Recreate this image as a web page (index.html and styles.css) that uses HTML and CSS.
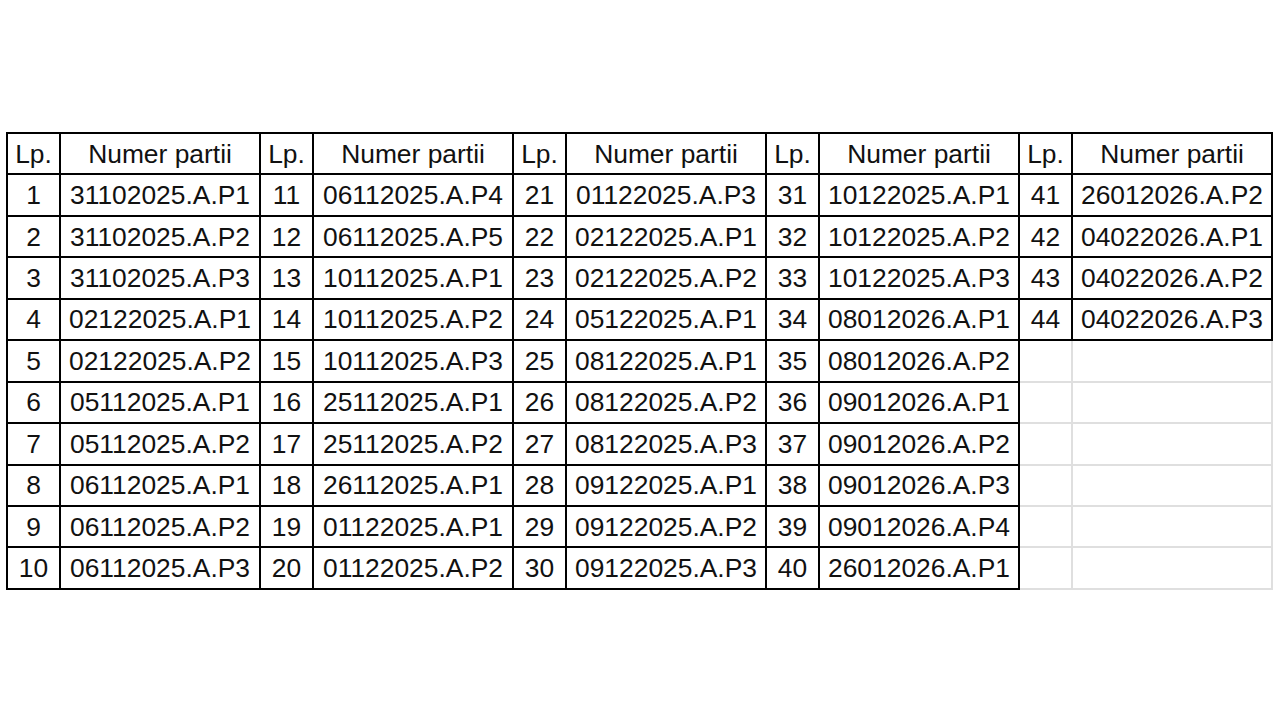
FILE: index.html
```html
<!DOCTYPE html>
<html lang="pl">
<head>
<meta charset="utf-8">
<title>Numery partii</title>
<link rel="stylesheet" href="styles.css">
</head>
<body>
<table class="grid">
<colgroup>
<col class="c-lp"><col class="c-nr"><col class="c-lp"><col class="c-nr"><col class="c-lp"><col class="c-nr"><col class="c-lp"><col class="c-nr"><col class="c-lp"><col class="c-nr">
</colgroup>
<tr><td>Lp.</td><td>Numer partii</td><td>Lp.</td><td>Numer partii</td><td>Lp.</td><td>Numer partii</td><td>Lp.</td><td>Numer partii</td><td>Lp.</td><td>Numer partii</td></tr>
<tr><td>1</td><td>31102025.A.P1</td><td>11</td><td>06112025.A.P4</td><td>21</td><td>01122025.A.P3</td><td>31</td><td>10122025.A.P1</td><td>41</td><td>26012026.A.P2</td></tr>
<tr><td>2</td><td>31102025.A.P2</td><td>12</td><td>06112025.A.P5</td><td>22</td><td>02122025.A.P1</td><td>32</td><td>10122025.A.P2</td><td>42</td><td>04022026.A.P1</td></tr>
<tr><td>3</td><td>31102025.A.P3</td><td>13</td><td>10112025.A.P1</td><td>23</td><td>02122025.A.P2</td><td>33</td><td>10122025.A.P3</td><td>43</td><td>04022026.A.P2</td></tr>
<tr><td>4</td><td>02122025.A.P1</td><td>14</td><td>10112025.A.P2</td><td>24</td><td>05122025.A.P1</td><td>34</td><td>08012026.A.P1</td><td>44</td><td>04022026.A.P3</td></tr>
<tr><td>5</td><td>02122025.A.P2</td><td>15</td><td>10112025.A.P3</td><td>25</td><td>08122025.A.P1</td><td>35</td><td>08012026.A.P2</td><td class="empty"></td><td class="empty"></td></tr>
<tr><td>6</td><td>05112025.A.P1</td><td>16</td><td>25112025.A.P1</td><td>26</td><td>08122025.A.P2</td><td>36</td><td>09012026.A.P1</td><td class="empty"></td><td class="empty"></td></tr>
<tr><td>7</td><td>05112025.A.P2</td><td>17</td><td>25112025.A.P2</td><td>27</td><td>08122025.A.P3</td><td>37</td><td>09012026.A.P2</td><td class="empty"></td><td class="empty"></td></tr>
<tr><td>8</td><td>06112025.A.P1</td><td>18</td><td>26112025.A.P1</td><td>28</td><td>09122025.A.P1</td><td>38</td><td>09012026.A.P3</td><td class="empty"></td><td class="empty"></td></tr>
<tr><td>9</td><td>06112025.A.P2</td><td>19</td><td>01122025.A.P1</td><td>29</td><td>09122025.A.P2</td><td>39</td><td>09012026.A.P4</td><td class="empty"></td><td class="empty"></td></tr>
<tr><td>10</td><td>06112025.A.P3</td><td>20</td><td>01122025.A.P2</td><td>30</td><td>09122025.A.P3</td><td>40</td><td>26012026.A.P1</td><td class="empty"></td><td class="empty"></td></tr>
</table>
</body>
</html>
```
FILE: styles.css
```css
html, body {
  margin: 0;
  padding: 0;
  background: #ffffff;
}

body {
  padding-top: 132px;
  padding-left: 6px;
  font-family: "Liberation Sans", Arial, sans-serif;
  color: #000000;
}

.grid {
  border-collapse: collapse;
  table-layout: fixed;
  width: 1267px;
}

.c-lp {
  width: 53px;
}

.c-nr {
  width: 200px;
}

.grid tr {
  height: 41.45px;
}

.grid td {
  border: 2px solid #000000;
  padding: 0;
  text-align: center;
  vertical-align: middle;
  font-size: 26.4px;
  line-height: 30px;
  white-space: nowrap;
  color: #111111;
}

.grid td.empty {
  border: 2px solid #dfdfdf;
}
```
